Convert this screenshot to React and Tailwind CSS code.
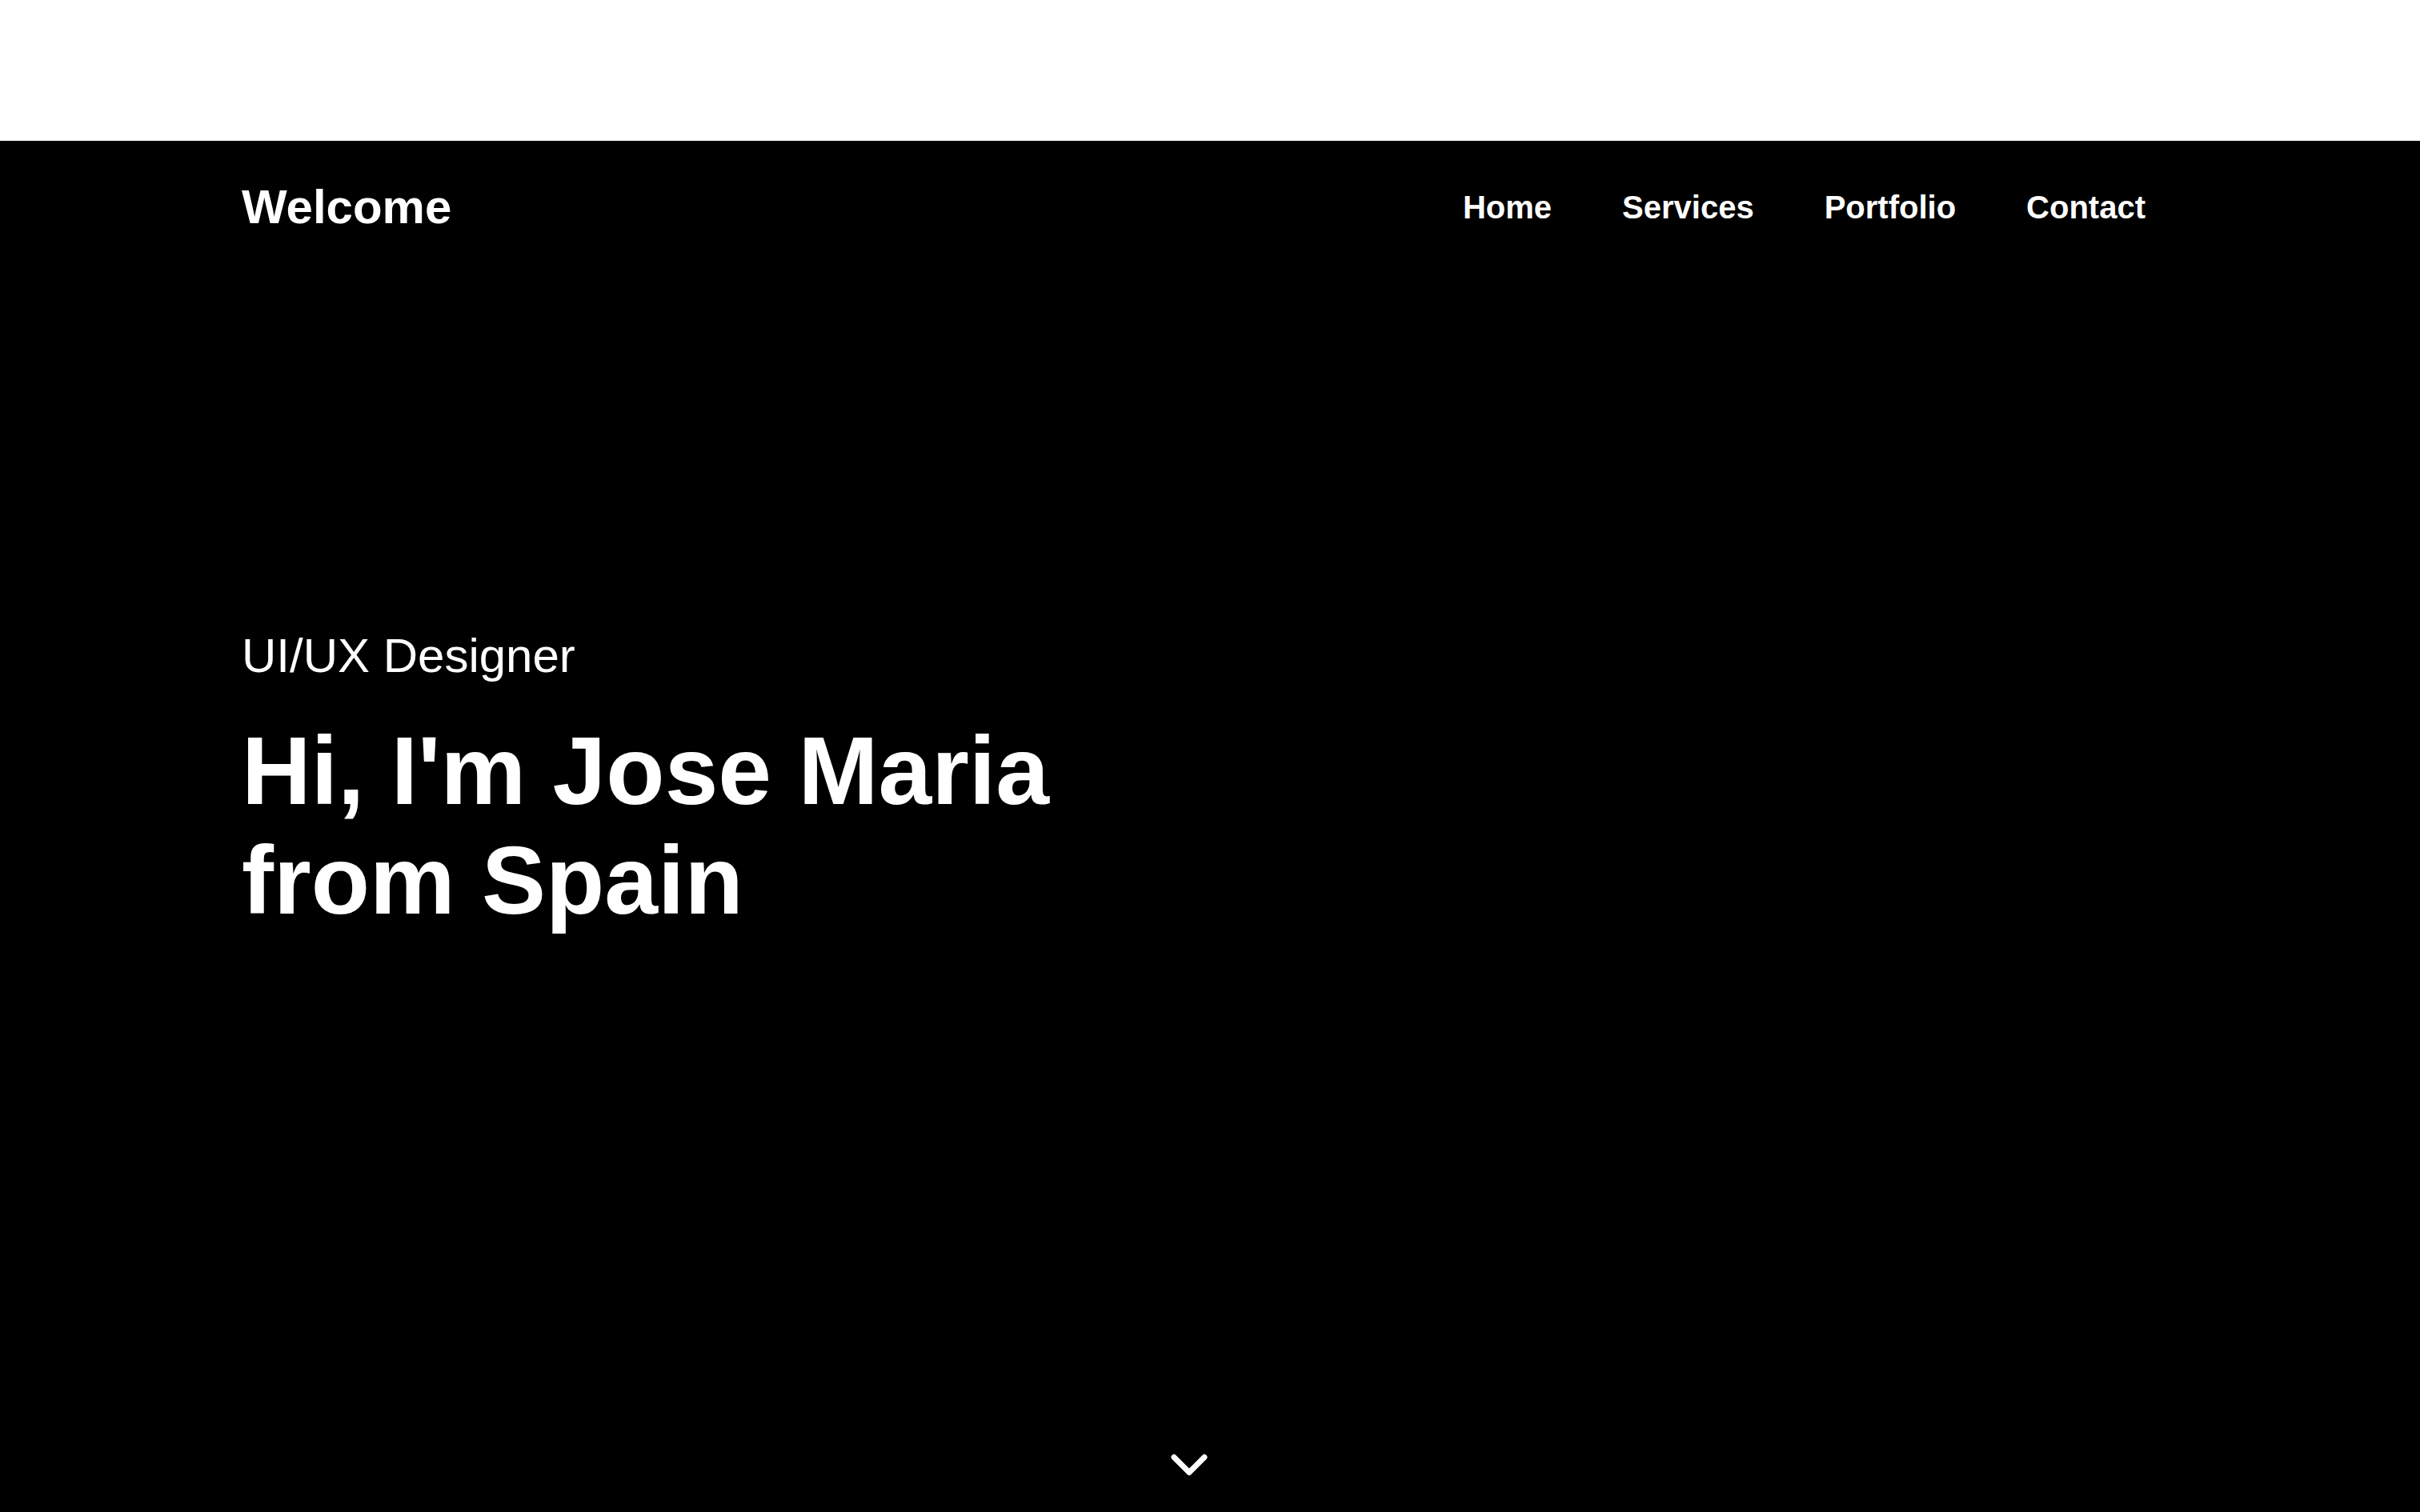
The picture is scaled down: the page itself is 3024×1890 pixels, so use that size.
import { ChevronDown } from 'lucide-react'

const links = ['Home', 'Services', 'Portfolio', 'Contact']

function Header() {
  return (
    <header className="flex items-center justify-between pt-[48px] pl-[302px] pr-[299px]">
      <a href="#" className="text-[60px] font-bold leading-[70px] text-white">
        Welcome
      </a>
      <nav className="flex items-center">
        {links.map((link) => (
          <a
            key={link}
            href="#"
            className="px-[44px] text-[40px] font-bold leading-[46px] text-white"
          >
            {link}
          </a>
        ))}
      </nav>
    </header>
  )
}

export default function App() {
  return (
    <div className="min-h-screen bg-white font-['Liberation_Sans',Arial,Helvetica,sans-serif]">
      <div className="h-[176px] bg-white" />

      <section className="flex h-[1714px] flex-col bg-black text-white">
        <Header />

        <div className="mt-[490px] px-[302px]">
          <p className="text-[60px] leading-[72px]">UI/UX Designer</p>
          <h1 className="mt-[39px] max-w-[1150px] text-[120px] font-bold leading-[137px]">
            Hi, I'm Jose Maria from Spain
          </h1>
        </div>

        <div className="mt-auto flex justify-center pb-[21px] pr-[52px]">
          <ChevronDown size={76} strokeWidth={2.2} className="text-white" />
        </div>
      </section>
    </div>
  )
}
